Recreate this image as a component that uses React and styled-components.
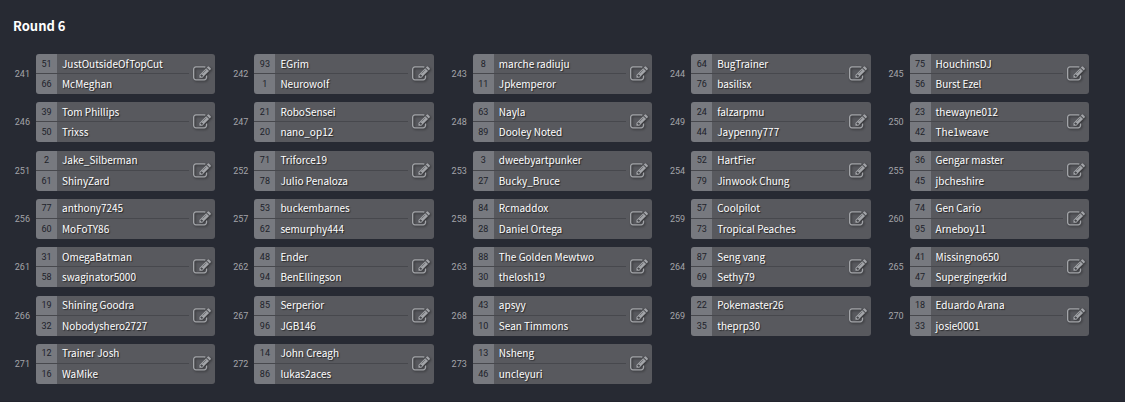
import React from "react";
import styled, { createGlobalStyle } from "styled-components";

const GlobalStyle = createGlobalStyle`
  * { box-sizing: border-box; }
  body {
    margin: 0;
    background: #272a33;
    color: #fff;
    font-family: "Noto Sans CJK JP", "Noto Sans", sans-serif;
  }
`;

const Page = styled.main`
  display: flex;
  flex-direction: column;
  min-height: 100vh;
  padding: 16px 36px 17px 13px;
  border-bottom: 1px solid #23252e;
`;

const Title = styled.h1`
  margin: 0 0 18px;
  font-size: 13px;
  line-height: 20px;
  font-weight: 700;
`;

const Matches = styled.ol`
  flex: 1;
  display: grid;
  grid-template-columns: repeat(5, minmax(0, 1fr));
  align-content: space-between;
  column-gap: 16px;
  margin: 0;
  padding: 0;
  list-style: none;
`;

const Match = styled.li`
  display: flex;
  align-items: center;
`;

const MatchNumber = styled.span`
  flex: 0 0 23px;
  padding-right: 6px;
  text-align: right;
  font-family: Roboto, sans-serif;
  font-size: 9px;
  line-height: 12px;
  color: #a3a4a9;
`;

const Card = styled.div`
  flex: 1;
  min-width: 0;
  display: flex;
  align-items: center;
  height: 40px;
  border-radius: 3px;
  overflow: hidden;
  background: linear-gradient(to right, #77797f 21px, #58595e 21px);
`;

const Players = styled.div`
  flex: 1;
  min-width: 0;
`;

const Player = styled.div`
  display: flex;
  align-items: center;
  height: 19px;

  & + & {
    height: 21px;
    border-top: 1px solid #47484d;
  }
`;

const Seed = styled.span`
  flex: 0 0 21px;
  text-align: center;
  font-family: Roboto, sans-serif;
  font-size: 9px;
  color: #20222a;
`;

const Name = styled.span`
  padding-left: 5px;
  font-size: 10px;
  line-height: 20px;
  font-weight: 400;
  white-space: nowrap;
  text-shadow: 1px 1px 1px rgba(0, 0, 0, 0.6);
`;

const EditButton = styled.button`
  flex: 0 0 26px;
  display: flex;
  justify-content: center;
  padding: 0;
  border: 0;
  background: none;
  color: #a2a4a8;
  cursor: pointer;

  svg {
    width: 18px;
    height: 18px;
    fill: currentColor;
    filter: drop-shadow(1px 1px 1px rgba(0, 0, 0, 0.5));
  }
`;

const matches = [
  [51, "JustOutsideOfTopCut", 66, "McMeghan"],
  [93, "EGrim", 1, "Neurowolf"],
  [8, "marche radiuju", 11, "Jpkemperor"],
  [64, "BugTrainer", 76, "basilisx"],
  [75, "HouchinsDJ", 56, "Burst Ezel"],
  [39, "Tom Phillips", 50, "Trixss"],
  [21, "RoboSensei", 20, "nano_op12"],
  [63, "Nayla", 89, "Dooley Noted"],
  [24, "falzarpmu", 44, "Jaypenny777"],
  [23, "thewayne012", 42, "The1weave"],
  [2, "Jake_Silberman", 61, "ShinyZard"],
  [71, "Triforce19", 78, "Julio Penaloza"],
  [3, "dweebyartpunker", 27, "Bucky_Bruce"],
  [52, "HartFier", 79, "Jinwook Chung"],
  [36, "Gengar master", 45, "jbcheshire"],
  [77, "anthony7245", 60, "MoFoTY86"],
  [53, "buckembarnes", 62, "semurphy444"],
  [84, "Rcmaddox", 28, "Daniel Ortega"],
  [57, "Coolpilot", 73, "Tropical Peaches"],
  [74, "Gen Cario", 95, "Arneboy11"],
  [31, "OmegaBatman", 58, "swaginator5000"],
  [48, "Ender", 94, "BenEllingson"],
  [88, "The Golden Mewtwo", 30, "thelosh19"],
  [87, "Seng vang", 69, "Sethy79"],
  [41, "Missingno650", 47, "Supergingerkid"],
  [19, "Shining Goodra", 32, "Nobodyshero2727"],
  [85, "Serperior", 96, "JGB146"],
  [43, "apsyy", 10, "Sean Timmons"],
  [22, "Pokemaster26", 35, "theprp30"],
  [18, "Eduardo Arana", 33, "josie0001"],
  [12, "Trainer Josh", 16, "WaMike"],
  [14, "John Creagh", 86, "lukas2aces"],
  [13, "Nsheng", 46, "uncleyuri"],
];

const EditIcon = () => (
  <svg viewBox="0 0 1792 1792" aria-hidden="true">
    <path d="M888 1184l116-116-152-152-116 116v56h96v96h56zm440-720q-16-16-33 1l-350 350q-17 17-1 33t33-1l350-350q17-17 1-33zm80 594v190q0 119-84.5 203.5t-203.5 84.5h-832q-119 0-203.5-84.5t-84.5-203.5v-832q0-119 84.5-203.5t203.5-84.5h832q63 0 117 25 15 7 18 23 3 17-9 29l-49 49q-14 14-32 8-23-6-45-6h-832q-66 0-113 47t-47 113v832q0 66 47 113t113 47h832q66 0 113-47t47-113v-126q0-13 9-22l64-64q15-15 35-7t20 29zm-96-738l288 288-672 672h-288v-288zm444 132l-92 92-288-288 92-92q28-28 68-28t68 28l152 152q28 28 28 68t-28 68z" />
  </svg>
);

export default function App() {
  return (
    <>
      <GlobalStyle />
      <Page>
        <Title>Round 6</Title>
        <Matches>
          {matches.map(([seedA, nameA, seedB, nameB], i) => (
            <Match key={i}>
              <MatchNumber>{241 + i}</MatchNumber>
              <Card>
                <Players>
                  <Player>
                    <Seed>{seedA}</Seed>
                    <Name>{nameA}</Name>
                  </Player>
                  <Player>
                    <Seed>{seedB}</Seed>
                    <Name>{nameB}</Name>
                  </Player>
                </Players>
                <EditButton type="button" aria-label={`Edit match ${241 + i}`}>
                  <EditIcon />
                </EditButton>
              </Card>
            </Match>
          ))}
        </Matches>
      </Page>
    </>
  );
}
